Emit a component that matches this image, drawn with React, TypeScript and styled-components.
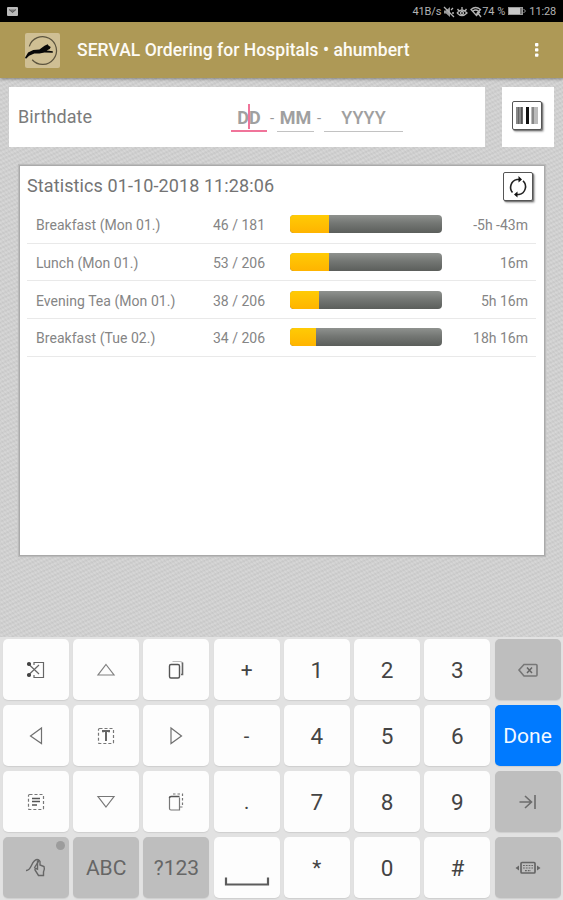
import React from "react";
import styled, { createGlobalStyle } from "styled-components";

const Global = createGlobalStyle`
  * { box-sizing: border-box; }
  body { margin: 0; font-family: Roboto, "Liberation Sans", sans-serif; background: #cfcfcf; }
  button { font: inherit; border: 0; padding: 0; margin: 0; }
`;

const Screen = styled.div`
  width: 563px;
  height: 900px;
  display: flex;
  flex-direction: column;
  overflow: hidden;
  background:
    repeating-linear-gradient(155deg, rgba(255, 255, 255, 0.1) 0 1px, rgba(120, 120, 120, 0.04) 2.2px 3px, rgba(255, 255, 255, 0.1) 4.2px),
    repeating-linear-gradient(50deg, rgba(255, 255, 255, 0.08) 0 1px, rgba(120, 120, 120, 0.03) 2px 3px),
    #cecece;
`;

const StatusBar = styled.header`
  height: 22px;
  flex: none;
  display: flex;
  align-items: center;
  justify-content: space-between;
  padding: 1px 7px 0;
  background: #000;
  color: #b4b4b4;
`;

const StatusGroup = styled.div`
  display: flex;
  align-items: center;
`;

const StatusText = styled.span<{ $gap?: number; $track?: number }>`
  font-size: 11px;
  line-height: 14px;
  letter-spacing: ${(p) => p.$track ?? 0}px;
  margin-left: ${(p) => p.$gap ?? 0}px;
  white-space: nowrap;
`;

const AppBar = styled.div`
  height: 56px;
  flex: none;
  display: flex;
  align-items: center;
  padding: 0 18px 0 25px;
  background: #ae9956;
  box-shadow: 0 1px 3px rgba(0, 0, 0, 0.4);
  z-index: 1;
`;

const Title = styled.h1`
  margin: 0 auto 0 17px;
  font-size: 17.5px;
  line-height: 24px;
  font-weight: 500;
  letter-spacing: 0.04px;
  color: #fdfbf5;
  white-space: nowrap;
`;

const Body = styled.main`
  flex: 1;
  display: flex;
  flex-direction: column;
  padding: 9px 9px 0;
`;

const SearchRow = styled.div`
  display: flex;
  justify-content: space-between;
  height: 60px;
`;

const Card = styled.div<{ $width: number; $center?: boolean }>`
  width: ${(p) => p.$width}px;
  display: flex;
  align-items: center;
  justify-content: ${(p) => (p.$center ? "center" : "flex-start")};
  padding: ${(p) => (p.$center ? "0 2px 4px 0" : "0 9px")};
  background: #fff;
`;

const FieldLabel = styled.label`
  width: 213px;
  font-size: 18px;
  line-height: 24px;
  letter-spacing: 0.1px;
  color: #7b7b7b;
`;

const DateField = styled.div<{ $width: number; $active?: boolean; $strong?: boolean }>`
  position: relative;
  width: ${(p) => p.$width}px;
  height: 28px;
  margin-top: 1px;
  text-align: center;
  font-size: 18px;
  line-height: 27px;
  font-weight: ${(p) => (p.$strong ? 700 : 500)};
  color: #a0a0a0;
  border-bottom: ${(p) => (p.$active ? "2px solid #f0749a" : "1px solid #c2c2c2")};
`;

const Caret = styled.span`
  position: absolute;
  left: 17px;
  top: 0;
  width: 2px;
  height: 25px;
  background: #f0749a;
`;

const Dash = styled.span<{ $width: number }>`
  width: ${(p) => p.$width}px;
  text-align: center;
  font-size: 15px;
  margin-top: 2px;
  color: #999;
`;

const SquareButton = styled.button`
  width: 30px;
  height: 29px;
  display: flex;
  align-items: center;
  justify-content: center;
  background: #fff;
  border: 1px solid #555;
  border-radius: 2px;
  box-shadow: 1px 1px 1px #777, 2px 2px 2px #bbb;
`;

const StatsPanel = styled.section`
  height: 391px;
  margin: 18px 9px 0 10px;
  padding: 5px 8px 0 7px;
  background: #fff;
  border: 1px solid #aaa;
  box-shadow: 0 0 1px 1px #bbb;
`;

const StatsHeader = styled.div`
  display: flex;
  justify-content: space-between;
  height: 35px;
  padding: 1px 3px 0 0;
`;

const StatsTitle = styled.h2`
  margin: 2px 0 0;
  font-size: 18px;
  line-height: 24px;
  font-weight: 400;
  letter-spacing: 0.1px;
  color: #747474;
`;

const StatRow = styled.div`
  height: 37.7px;
  display: grid;
  grid-template-columns: 153px 84px 174px 1fr;
  align-items: center;
  padding: 0 8px 0 9px;
  border-bottom: 1px solid #e9e9e9;
  font-size: 14px;
  line-height: 20px;
  color: #858585;
  white-space: nowrap;
`;

const MealName = styled.span`
  margin-top: 2px;
  letter-spacing: 0.04px;
`;

const Count = styled.span`
  width: 76px;
  margin-top: 2px;
  text-align: right;
`;

const Remaining = styled.span`
  margin-top: 2px;
  text-align: right;
`;

const Bar = styled.div`
  width: 152px;
  height: 18px;
  margin: 0 0 0 17px;
  border-radius: 4px;
  overflow: hidden;
  background: linear-gradient(#8f928f, #747774 45%, #5b5e5b);
`;

const Fill = styled.div<{ $width: number }>`
  width: ${(p) => p.$width}px;
  height: 100%;
  background: linear-gradient(#ffcb05, #ffb400);
`;

const Keyboard = styled.div`
  height: 263px;
  flex: none;
  display: grid;
  grid-template-columns: repeat(8, 1fr);
  grid-auto-rows: 61px;
  gap: 5px 4.4px;
  padding: 2px 2.5px 0 3px;
  background: #e2e2e2;
`;

const Key = styled.button<{ $tone: "light" | "gray" | "blue"; $size?: number }>`
  position: relative;
  display: flex;
  align-items: center;
  justify-content: center;
  border-radius: 5px;
  background: ${(p) => ({ light: "#fdfdfd", gray: "#bebebe", blue: "#007aff" })[p.$tone]};
  color: ${(p) => ({ light: "#444", gray: "#666", blue: "#f4f9ff" })[p.$tone]};
  box-shadow: 0 1px 1px #cfcfcf;
  font-size: ${(p) => p.$size ?? 22.5}px;
  line-height: 26px;
`;

const KeyDot = styled.i`
  position: absolute;
  right: 4px;
  top: 4px;
  width: 9px;
  height: 9px;
  border-radius: 50%;
  background: #9c9c9c;
`;

const line = { fill: "none", stroke: "currentColor", strokeWidth: 1.2 } as const;

const Glyph = ({ children, w = 26, h = 26 }: { children: React.ReactNode; w?: number; h?: number }) => (
  <svg width={w} height={h} viewBox={`0 0 ${w} ${h}`} {...line}>
    {children}
  </svg>
);

const CutIcon = () => (
  <Glyph>
    <path d="M11 8V5.5H20.5V20.5H11V18M6 7.5L16 17M6 17.5L16 8" stroke="#666" />
    <circle cx="6" cy="7" r="1.5" fill="currentColor" />
    <circle cx="6" cy="18" r="1.5" fill="currentColor" />
  </Glyph>
);
const UpIcon = () => <Glyph><path d="M13 7.5L21 18H5Z" stroke="#808080" /></Glyph>;
const DownIcon = () => <Glyph><path d="M13 18L21 7.5H5Z" stroke="#777" /></Glyph>;
const LeftIcon = () => <Glyph><path d="M7.5 13L18.5 5V20.5Z" stroke="#707070" /></Glyph>;
const RightIcon = () => <Glyph><path d="M18.5 13L8 5V20.5Z" stroke="#707070" /></Glyph>;
const CopyIcon = () => (
  <Glyph>
    <rect x="6.5" y="7.5" width="10" height="13.5" rx="1.5" strokeWidth="1.4" stroke="#555" />
    <path d="M9.5 4.5H17Q19.5 4.5 19.5 7" stroke="#bbb" />
    <path d="M19.5 5.5V17.5H18" strokeWidth="1.6" stroke="#666" />
  </Glyph>
);
const PasteIcon = () => (
  <Glyph>
    <path d="M16.5 8.5V21H8Q6.5 21 6.5 19.5V8.5" stroke="#777" />
    <path d="M6.5 9Q6.5 7.5 8 7.5H16.5" strokeWidth="1.6" stroke="#555" />
    <path d="M10 5H19.5V18H17" strokeDasharray="2.5 2" stroke="#777" />
  </Glyph>
);
const SelectWordIcon = () => (
  <Glyph>
    <rect x="5.5" y="5.5" width="15" height="15" rx="1" strokeDasharray="3 2" stroke="#777" />
    <path d="M10 9.2V8H16V9.2M13 8V18" strokeWidth="2" stroke="#666" />
  </Glyph>
);
const SelectAllIcon = () => (
  <Glyph>
    <rect x="5.5" y="5.5" width="15" height="15" rx="1" strokeDasharray="3 2" stroke="#777" />
    <path d="M9 9.5H17M9 12.5H17M9 16H14" strokeWidth="1.4" stroke="#555" />
  </Glyph>
);
const BackspaceIcon = () => (
  <Glyph>
    <path d="M4 13L9 7.5H21Q22 7.5 22 8.5V18Q22 19 21 19H9Z" strokeWidth="1.6" stroke="#777" />
    <path d="M12 10.5L17 16M17 10.5L12 16" strokeWidth="1.5" />
  </Glyph>
);
const TabIcon = () => (
  <Glyph><path d="M4.5 13H16M10 7L16.5 13L10 19M20 6V20" strokeWidth="1.6" stroke="#6c6c6c" /></Glyph>
);
const ResizeIcon = () => (
  <Glyph w={30}>
    <rect x="8" y="7.5" width="14" height="10.5" rx="1" strokeWidth="1.7" />
    <path d="M10 10.5H20M10 13H20M12 15.7H18" strokeDasharray="1.8 1" />
    <path d="M6 10.5V15.5L2.5 13ZM24 10.5V15.5L27.5 13Z" fill="currentColor" stroke="none" />
  </Glyph>
);
const SwipeIcon = () => (
  <Glyph>
    <path d="M3 15.5C9 16 8 5 14 4.5C19 4.5 12 10 11.5 13" strokeWidth="1.4" />
    <path d="M14.5 14V6.5Q16 4.5 17 6.5V10L21 11.5Q22 14 20.5 17V20.5H15.5L12 15Q11.5 12.5 14.5 14Z" strokeWidth="1.4" />
  </Glyph>
);
const SpaceIcon = () => (
  <Glyph w={46} h={50}><path d="M2 34.5V41.5H44V34.5" strokeWidth="2.2" stroke="#5c5c5c" /></Glyph>
);

type KeyDef = { id: string; face: React.ReactNode; tone?: "light" | "gray" | "blue"; size?: number; dot?: boolean };
const text = (face: string, size?: number): KeyDef => ({ id: face, face, size });

const keys: KeyDef[] = [
  { id: "cut", face: <CutIcon /> },
  { id: "up", face: <UpIcon /> },
  { id: "copy", face: <CopyIcon /> },
  text("+", 21), text("1"), text("2"), text("3"),
  { id: "backspace", face: <BackspaceIcon />, tone: "gray" },
  { id: "left", face: <LeftIcon /> },
  { id: "word", face: <SelectWordIcon /> },
  { id: "right", face: <RightIcon /> },
  text("-", 20), text("4"), text("5"), text("6"),
  { id: "done", face: "Done", tone: "blue", size: 21 },
  { id: "all", face: <SelectAllIcon /> },
  { id: "down", face: <DownIcon /> },
  { id: "paste", face: <PasteIcon /> },
  text(".", 20), text("7"), text("8"), text("9"),
  { id: "tab", face: <TabIcon />, tone: "gray" },
  { id: "swipe", face: <SwipeIcon />, tone: "gray", dot: true },
  { id: "abc", face: "ABC", tone: "gray", size: 21 },
  { id: "sym", face: "?123", tone: "gray", size: 21 },
  { id: "space", face: <SpaceIcon /> },
  text("*", 21), text("0"), text("#"),
  { id: "resize", face: <ResizeIcon />, tone: "gray" },
];

const stats = [
  { name: "Breakfast (Mon 01.)", count: "46 / 181", fill: 39, left: "-5h -43m" },
  { name: "Lunch (Mon 01.)", count: "53 / 206", fill: 39, left: "16m" },
  { name: "Evening Tea (Mon 01.)", count: "38 / 206", fill: 29, left: "5h 16m" },
  { name: "Breakfast (Tue 02.)", count: "34 / 206", fill: 25.5, left: "18h 16m" },
];

const Logo = () => (
  <svg width="35" height="35" viewBox="0 0 34 34">
    <rect width="34" height="34" rx="2" fill="#cfbf94" />
    <path d="M4.2 13A13.5 13.5 0 1 1 7 26" fill="none" stroke="#5c543e" strokeWidth="1.2" />
    <path d="M0 24L3 19L8 16.5L14 16L19 12.5L22 11L23 12.5L25 13.5L24 15.5L21 17L27 17.8L27 19.3L19 19L14 20L9 20L4 22L1 25Z" fill="#080808" />
  </svg>
);

const StatusIcons = () => (
  <svg width="39" height="12" viewBox="0 0 39 12" fill="none" stroke="#b4b4b4" strokeWidth="1.3">
    <path d="M1 4.5H3L7 1V11L3 7.5H1Z" fill="#999" stroke="none" />
    <path d="M1 1L11 11M8 4L10 2M9 7H11" />
    <path d="M14 7Q19 1 24 7Q19 12 14 7M14.5 3L16 5M19 1V4M23.5 3L22 5" />
    <circle cx="19" cy="7" r="1.5" />
    <path d="M28 3.5Q32.5 -.5 37.5 3.5L33 9ZM30 5Q32.5 3 35.5 5M33 10L37 6M34 6L38 11" />
  </svg>
);

export default function App() {
  return (
    <>
      <Global />
      <Screen>
        <StatusBar>
          <svg width="11" height="9" viewBox="0 0 11 9">
            <rect width="11" height="9" rx="1" fill="#bbb" />
            <path d="M2 2.5L5.5 5.5L9 2.5" fill="#777" stroke="#555" />
          </svg>
          <StatusGroup>
            <StatusText $track={-0.15}>41B/s</StatusText>
            <svg width="2" height="1" />
            <StatusIcons />
            <StatusText $track={0}>74 %</StatusText>
            <StatusText $gap={3}>
              <svg width="18" height="8" viewBox="0 0 18 8">
                <rect x=".5" y=".5" width="14" height="7" fill="#777" stroke="#999" />
                <rect x="1" y="1" width="11" height="6" fill="#c8c8c8" />
                <path d="M15.5 2L17.5 4L15.5 6" fill="none" stroke="#999" />
              </svg>
            </StatusText>
            <StatusText $gap={3} $track={-0.15}>11:28</StatusText>
          </StatusGroup>
        </StatusBar>
        <AppBar>
          <Logo />
          <Title>SERVAL Ordering for Hospitals • ahumbert</Title>
          <svg width="16" height="18" viewBox="0 0 16 18" fill="#fff">
            <rect x="6" y="2" width="3.4" height="3.4" rx="0.8" />
            <rect x="6" y="7.2" width="3.4" height="3.4" rx="0.8" />
            <rect x="6" y="12.4" width="3.4" height="3.4" rx="0.8" />
          </svg>
        </AppBar>
        <Body>
          <SearchRow>
            <Card $width={476}>
              <FieldLabel>Birthdate</FieldLabel>
              <DateField $width={36} $active $strong>DD<Caret /></DateField>
              <Dash $width={10}>-</Dash>
              <DateField $width={37} $strong>MM</DateField>
              <Dash $width={10}>-</Dash>
              <DateField $width={79}>YYYY</DateField>
            </Card>
            <Card $width={52} $center>
              <SquareButton aria-label="Scan barcode">
                <svg width="24" height="17" viewBox="0 0 24 17">
                  <rect x="1" width="7" height="17" fill="#888" />
                  <rect x="3" width="1" height="17" fill="#666" />
                  <rect x="6" width="1.5" height="17" fill="#555" />
                  <rect x="11" width="3" height="17" fill="#111" />
                  <rect x="16" width="7" height="17" fill="#bbb" />
                  <rect x="17" width="2" height="17" fill="#888" />
                </svg>
              </SquareButton>
            </Card>
          </SearchRow>
          <StatsPanel>
            <StatsHeader>
              <StatsTitle>Statistics 01-10-2018 11:28:06</StatsTitle>
              <SquareButton aria-label="Refresh">
                <svg width="22" height="24" viewBox="0 0 22 24" fill="none" stroke="#222" strokeWidth="1.6">
                  <path d="M5.5 17.5A8 8 0 0 1 10 4.5H12M16 5.8A8 8 0 0 1 12 19.5H10" />
                  <path d="M11.5 1L15 4.5L11.5 7.5ZM10.5 16.5L7 19.5L10.5 22.5Z" fill="#111" stroke="none" />
                </svg>
              </SquareButton>
            </StatsHeader>
            {stats.map((s) => (
              <StatRow key={s.name}>
                <MealName>{s.name}</MealName>
                <Count>{s.count}</Count>
                <Bar><Fill $width={s.fill} /></Bar>
                <Remaining>{s.left}</Remaining>
              </StatRow>
            ))}
          </StatsPanel>
        </Body>
        <Keyboard>
          {keys.map((k) => (
            <Key key={k.id} $tone={k.tone ?? "light"} $size={k.size}>
              {k.face}
              {k.dot && <KeyDot />}
            </Key>
          ))}
        </Keyboard>
      </Screen>
    </>
  );
}
